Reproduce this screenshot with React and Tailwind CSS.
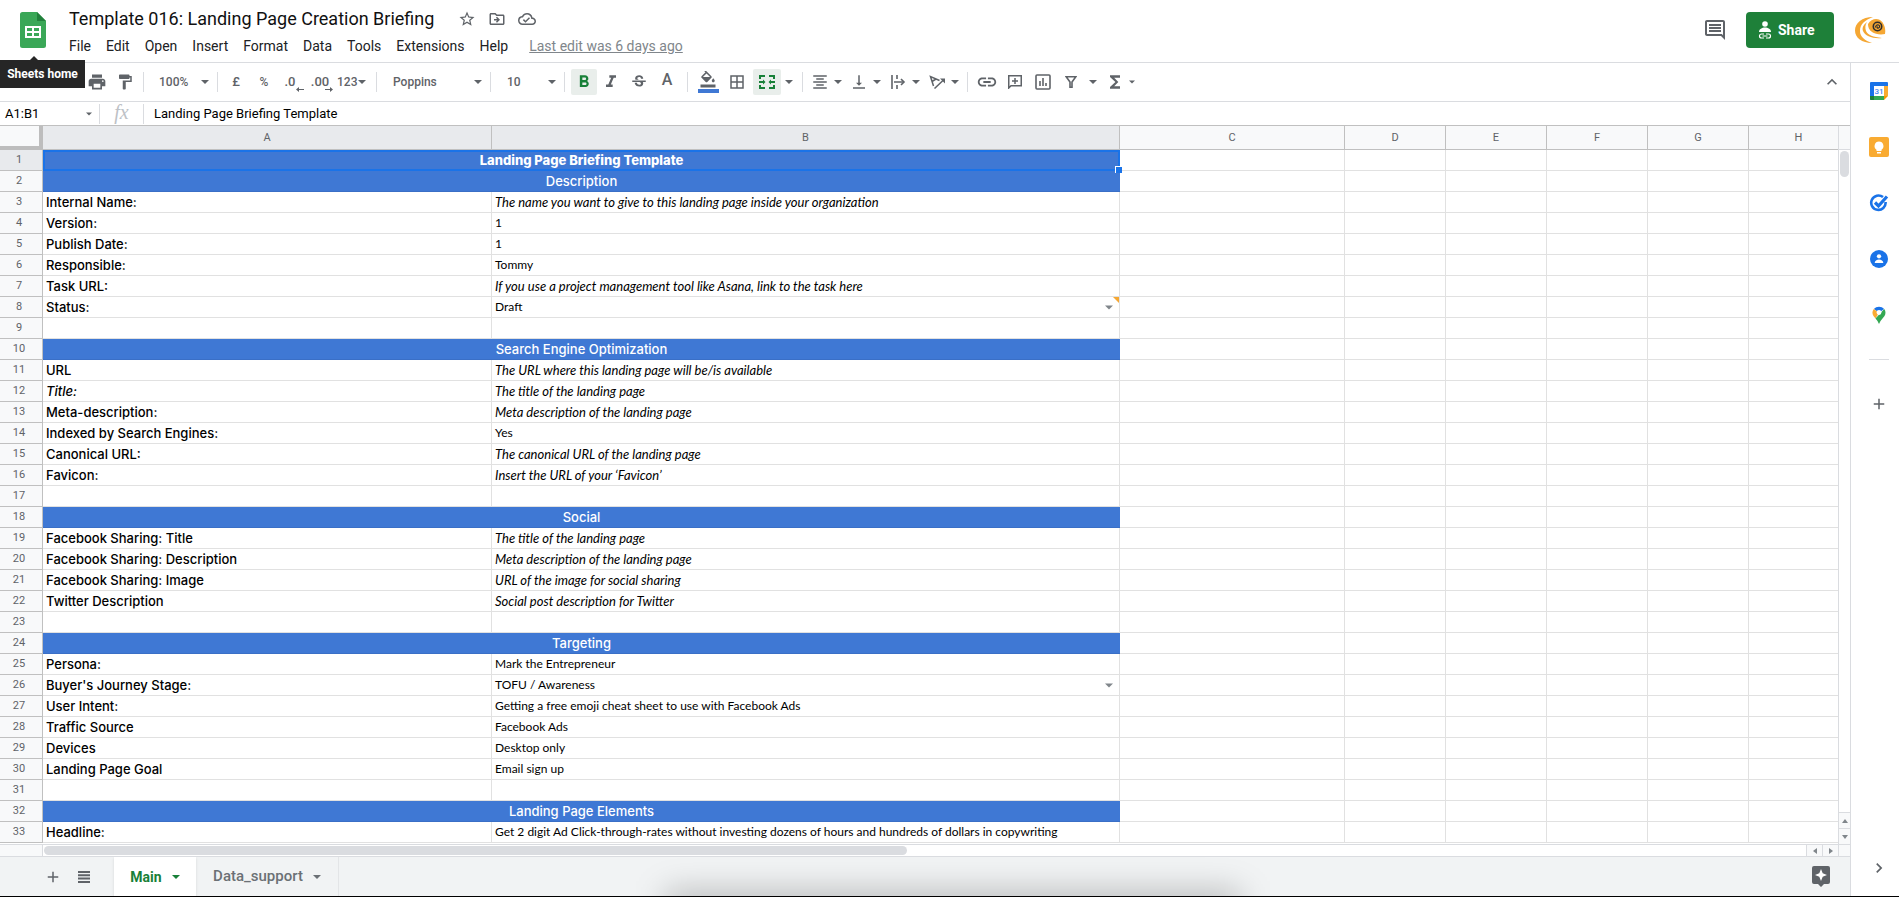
import {
  MdAdd,
  MdBorderAll,
  MdFormatAlignCenter,
  MdFormatBold,
  MdFormatColorFill,
  MdFormatItalic,
  MdFormatPaint,
  MdFunctions,
  MdInsertLink,
  MdKeyboardArrowRight,
  MdKeyboardArrowUp,
  MdOutlineCloudDone,
  MdOutlineDriveFileMove,
  MdOutlineInsertComment,
  MdPrint,
  MdStarBorder,
  MdStrikethroughS,
  MdVerticalAlignBottom,
} from 'react-icons/md'
import clsx from 'clsx'

const MENUS = ['File', 'Edit', 'Open', 'Insert', 'Format', 'Data', 'Tools', 'Extensions', 'Help']

const COLUMNS = ['A', 'B', 'C', 'D', 'E', 'F', 'G', 'H']

const ROWS = [
  { section: 'Landing Page Briefing Template', selected: true },
  { section: 'Description' },
  { label: 'Internal Name:', value: 'The name you want to give to this landing page inside your organization', italic: true },
  { label: 'Version:', value: '1' },
  { label: 'Publish Date:', value: '1' },
  { label: 'Responsible:', value: 'Tommy' },
  { label: 'Task URL:', value: 'If you use a project management tool like Asana, link to the task here', italic: true },
  { label: 'Status:', value: 'Draft', dropdown: true, note: true },
  {},
  { section: 'Search Engine Optimization' },
  { label: 'URL', value: 'The URL where this landing page will be/is available', italic: true },
  { label: 'Title:', value: 'The title of the landing page', italic: true, italicLabel: true },
  { label: 'Meta-description:', value: 'Meta description of the landing page', italic: true },
  { label: 'Indexed by Search Engines:', value: 'Yes' },
  { label: 'Canonical URL:', value: 'The canonical URL of the landing page', italic: true },
  { label: 'Favicon:', value: 'Insert the URL of your ‘Favicon’', italic: true },
  {},
  { section: 'Social' },
  { label: 'Facebook Sharing: Title', value: 'The title of the landing page', italic: true },
  { label: 'Facebook Sharing: Description', value: 'Meta description of the landing page', italic: true },
  { label: 'Facebook Sharing: Image', value: 'URL of the image for social sharing', italic: true },
  { label: 'Twitter Description', value: 'Social post description for Twitter', italic: true },
  {},
  { section: 'Targeting' },
  { label: 'Persona:', value: 'Mark the Entrepreneur' },
  { label: "Buyer's Journey Stage:", value: 'TOFU / Awareness', dropdown: true },
  { label: 'User Intent:', value: 'Getting a free emoji cheat sheet to use with Facebook Ads' },
  { label: 'Traffic Source', value: 'Facebook Ads' },
  { label: 'Devices', value: 'Desktop only' },
  { label: 'Landing Page Goal', value: 'Email sign up' },
  {},
  { section: 'Landing Page Elements' },
  { label: 'Headline:', value: 'Get 2 digit Ad Click-through-rates without investing dozens of hours and hundreds of dollars in copywriting' },
]

function Caret({ className }) {
  return (
    <svg viewBox="0 0 8 4" className={clsx('h-1 w-2 shrink-0', className)} fill="currentColor" aria-hidden="true">
      <path d="M0 0h8L4 4z" />
    </svg>
  )
}

function Separator({ className }) {
  return <span className={clsx('h-5 w-px shrink-0 bg-[#dadce0]', className)} />
}

function Tool({ label, active, className, children }) {
  return (
    <button
      type="button"
      aria-label={label}
      className={clsx(
        'flex h-[26px] shrink-0 items-center justify-center',
        active && 'rounded-xs bg-[#e9eeeb] text-[#188038]',
        className || 'w-7',
      )}
    >
      {children}
    </button>
  )
}

function ToolGroup({ label, children }) {
  return (
    <button type="button" aria-label={label} className="flex h-[26px] w-[39px] shrink-0 items-center">
      <span className="flex w-7 justify-center">{children}</span>
      <Caret />
    </button>
  )
}

function SheetsLogo() {
  return (
    <svg viewBox="0 0 26 36" className="h-9 w-[26px]" aria-hidden="true">
      <path d="M2.500 0H17l9 9v24.500a2.500 2.500 0 0 1-2.500 2.500h-21A2.500 2.500 0 0 1 0 33.500v-31A2.500 2.500 0 0 1 2.500 0z" fill="#3aa757" />
      <path d="M17 0l9 9h-9z" fill="#22803c" />
      <path d="M5 14h16v12H5zM7 16v3h5v-3zm7 0v3h5v-3zm-7 5v3h5v-3zm7 0v3h5v-3z" fill="#fff" fillRule="evenodd" />
    </svg>
  )
}

function Avatar() {
  return (
    <svg viewBox="0 0 32 28" className="h-7 w-8" aria-hidden="true">
      <path d="M19 1C8 1 1 7 1 14.500 1 22 8 27 18 27c-7-2.500-12-6-12-12C6 8 11 4 19 1z" fill="#f5a733" />
      <path d="M13 6c-4 3-5 6-4 9 2 5 10 8 19 7-9-1-14-3-16-7-1-3-1-6 1-9z" fill="#f5a733" />
      <path d="M14 8c3-5 8-6 12-4 4 3 6 8 5 14-5 1-10 0-13-2-3-2-4-5-4-8z" fill="#f5a733" />
      <circle cx="23.500" cy="10.500" r="4.200" fill="#f5a733" stroke="#2d2d2d" strokeWidth="1.600" />
      <path d="M21.500 11.500c0-2 1.500-3 3-2.500s1.500 2.500 0 3-2-.5-1-1.500" fill="none" stroke="#2d2d2d" strokeWidth="1.100" />
    </svg>
  )
}

function Header() {
  return (
    <header className="flex h-[63px] shrink-0 items-start border-b border-[#dadce0] bg-white">
      <div className="relative ml-5 mt-3 shrink-0">
        <a href="#home" aria-label="Sheets home">
          <SheetsLogo />
        </a>
        <div
          role="tooltip"
          className="absolute top-12 -left-5 z-20 flex h-7 w-[85px] items-center justify-center bg-[#262626] text-xs font-bold whitespace-nowrap text-white"
        >
          <svg viewBox="0 0 10 5" className="absolute -top-1 left-[29px] h-[5px] w-[10px]" aria-hidden="true">
            <path d="M5 0l5 5H0z" fill="#262626" />
          </svg>
          Sheets home
        </div>
      </div>

      <div className="ml-[23px] min-w-0 flex-1">
        <div className="flex h-[37px] items-center">
          <h1 className="text-lg leading-6 whitespace-nowrap text-[#111]">Template 016: Landing Page Creation Briefing</h1>
          <div className="ml-6 flex items-center gap-3 text-[#5f6368]">
            <button type="button" aria-label="Star"><MdStarBorder className="size-[18px]" /></button>
            <button type="button" aria-label="Move"><MdOutlineDriveFileMove className="size-[18px]" /></button>
            <button type="button" aria-label="See document status"><MdOutlineCloudDone className="size-[18px]" /></button>
          </div>
        </div>
        <nav className="flex h-[18px] items-center gap-[15px] text-sm whitespace-nowrap text-[#202124]">
          {MENUS.map((menu) => (
            <button key={menu} type="button">{menu}</button>
          ))}
          <a href="#history" className="ml-[6px] text-[#80868b] underline">Last edit was 6 days ago</a>
        </nav>
      </div>

      <div className="flex h-[60px] shrink-0 items-center pr-[13px]">
        <button type="button" aria-label="Open comment history" className="text-[#5f6368]">
          <MdOutlineInsertComment className="size-6" />
        </button>
        <button
          type="button"
          className="ml-[19px] flex h-9 w-[88px] items-center gap-[6px] rounded-sm bg-[#1e8039] pl-3 text-sm font-bold text-white"
        >
          <svg viewBox="0 0 14 18" className="h-[18px] w-[14px]" fill="#fff" aria-hidden="true">
            <circle cx="7" cy="3" r="2.800" />
            <path d="M1 11c0-3 3-4.500 6-4.500s6 1.500 6 4.500z" />
            <path d="M6 13H3.500a2 2 0 0 0 0 4H6m2-4h2.500a2 2 0 0 1 0 4H8M4.500 15h5" fill="none" stroke="#fff" strokeWidth="1.200" />
          </svg>
          Share
        </button>
        <button type="button" aria-label="Account" className="ml-5">
          <Avatar />
        </button>
      </div>
    </header>
  )
}

function Toolbar() {
  return (
    <div className="flex h-[39px] shrink-0 items-center border-b border-[#dadce0] pl-[83px] text-[#5f6368]">
      <Tool label="Print"><MdPrint className="size-5" /></Tool>
      <Tool label="Paint format"><MdFormatPaint className="size-[18px]" /></Tool>
      <Separator className="ml-1" />
      <button type="button" className="flex w-[73px] shrink-0 items-center justify-between pr-2 pl-[15px] text-xs font-medium">
        100% <Caret />
      </button>
      <Separator className="mr-1" />
      <Tool label="Format as currency"><span className="text-[13px] font-medium">£</span></Tool>
      <Tool label="Format as percent"><span className="text-xs font-medium">%</span></Tool>
      <Tool label="Decrease decimal places">
        <span className="relative pr-1 text-[13px] font-medium">
          .0
          <svg viewBox="0 0 8 5" className="absolute -right-1 bottom-0 h-[5px] w-2" fill="currentColor" aria-hidden="true">
            <path d="M0 2.500L3 0v2h5v1H3v2z" />
          </svg>
        </span>
      </Tool>
      <Tool label="Increase decimal places">
        <span className="relative text-[13px] font-medium">
          .00
          <svg viewBox="0 0 8 5" className="absolute -right-1 bottom-0 h-[5px] w-2" fill="currentColor" aria-hidden="true">
            <path d="M8 2.500L5 0v2H0v1h5v2z" />
          </svg>
        </span>
      </Tool>
      <button type="button" className="flex w-[38px] shrink-0 items-center gap-px pl-[3px] text-xs font-medium">
        123 <Caret />
      </button>
      <Separator className="ml-1" />
      <button type="button" className="flex w-[113px] shrink-0 items-center justify-between pr-2 pl-4 text-xs font-medium">
        Poppins <Caret />
      </button>
      <Separator />
      <button type="button" className="flex w-[73px] shrink-0 items-center justify-between pr-2 pl-4 text-xs font-medium">
        10 <Caret />
      </button>
      <Separator />
      <Tool label="Bold" active className="ml-[6px] w-[26px]"><MdFormatBold className="size-5" /></Tool>
      <Tool label="Italic"><MdFormatItalic className="size-5" /></Tool>
      <Tool label="Strikethrough"><MdStrikethroughS className="size-[18px]" /></Tool>
      <Tool label="Text colour"><span className="pb-1 text-base leading-4 font-medium">A</span></Tool>
      <Separator className="mx-[6px]" />
      <Tool label="Fill colour">
        <span className="flex flex-col items-center">
          <MdFormatColorFill className="size-[18px]" viewBox="0 2 24 24" />
          <span className="h-1 w-[21px] bg-[#3f78d4]" />
        </span>
      </Tool>
      <Tool label="Borders" className="ml-px w-7"><MdBorderAll className="size-[18px]" /></Tool>
      <Tool label="Merge cells" active className="ml-[2px] w-7">
        <svg viewBox="0 0 16 14" className="h-[14px] w-4" fill="none" stroke="currentColor" strokeWidth="2" aria-hidden="true">
          <path d="M1 4V1h5M10 1h5v3M1 10v3h5M10 13h5v-3M0 7h5M16 7h-5" />
          <path d="M4 4.500L6.500 7 4 9.500zM12 4.500L9.500 7l2.500 2.500z" fill="currentColor" stroke="none" />
        </svg>
      </Tool>
      <Tool label="Select merge type" className="w-4"><Caret /></Tool>
      <Separator className="ml-[5px] mr-[3px]" />
      <ToolGroup label="Horizontal align"><MdFormatAlignCenter className="size-[18px]" /></ToolGroup>
      <ToolGroup label="Vertical align"><MdVerticalAlignBottom className="size-[18px]" /></ToolGroup>
      <ToolGroup label="Text wrapping">
        <svg viewBox="0 0 16 14" className="h-[14px] w-4" fill="none" stroke="currentColor" aria-hidden="true">
          <path d="M2 0v14M7 0v4M7 10v4M4 7h9" strokeWidth="1.600" />
          <path d="M11 4l3 3-3 3" strokeWidth="1.600" />
        </svg>
      </ToolGroup>
      <ToolGroup label="Text rotation">
        <svg viewBox="0 0 17 14" className="h-[14px] w-[17px]" fill="none" stroke="currentColor" strokeWidth="1.500" aria-hidden="true">
          <path d="M4.500 11L1.500 1.500l9 4M3 6.500l4-2.500M5.500 13.500l9-8.500" />
          <path d="M11 3.500h5v5z" fill="currentColor" stroke="none" />
        </svg>
      </ToolGroup>
      <Separator className="mx-[5px]" />
      <Tool label="Insert link"><MdInsertLink className="size-[22px]" /></Tool>
      <Tool label="Insert comment">
        <svg viewBox="0 0 14 14" className="size-[14px]" fill="none" stroke="currentColor" strokeWidth="1.500" aria-hidden="true">
          <path d="M.75 13V.75h12.500v10H3L.75 13zM7 3v6M4 6h6" />
        </svg>
      </Tool>
      <Tool label="Insert chart">
        <svg viewBox="0 0 16 16" className="size-4" fill="none" stroke="currentColor" strokeWidth="1.600" aria-hidden="true">
          <rect x="1" y="1" width="14" height="14" rx="1" />
          <path d="M5 12V7M8 12V4M11 12V9" />
        </svg>
      </Tool>
      <Tool label="Create a filter">
        <svg viewBox="0 0 12 12" className="size-3" fill="none" stroke="currentColor" strokeWidth="1.600" aria-hidden="true">
          <path d="M1.200.8h9.600L7 6v5.200H5V6z" />
        </svg>
      </Tool>
      <Tool label="Filter views" className="w-4"><Caret /></Tool>
      <Tool label="Functions"><MdFunctions className="size-5" /></Tool>
      <Caret className="w-[6px]" />
      <button type="button" aria-label="Hide the menus" className="mr-2 ml-auto">
        <MdKeyboardArrowUp className="size-5" />
      </button>
    </div>
  )
}

function FormulaBar() {
  return (
    <div className="flex h-6 shrink-0 items-center border-b border-[#c0c0c0] text-[13px]">
      <button type="button" className="flex h-5 w-[99px] shrink-0 items-center justify-between pr-[7px] pl-[5px] text-black">
        A1:B1 <Caret className="w-[6px] text-[#5f6368]" />
      </button>
      <Separator />
      <span className="w-[43px] shrink-0 pb-1 text-center font-['Liberation_Serif',serif] text-xl leading-5 text-[#bdc1c6] italic">fx</span>
      <Separator className="h-4" />
      <input
        aria-label="Formula"
        defaultValue="Landing Page Briefing Template"
        className="h-5 min-w-0 flex-1 px-[10px] text-black outline-none"
      />
    </div>
  )
}

const cellBorder = 'border-r border-b border-[#e1e1e1]'
const headBorder = 'border-r border-b border-[#c0c0c0]'

function Row({ row, number }) {
  return (
    <tr className="h-[21px]">
      <th
        scope="row"
        className={clsx(
          'p-0 pr-1 text-center text-[11px] leading-5 font-normal text-[#5f6368]',
          headBorder,
          row.selected ? 'bg-[#e8eaed]' : 'bg-[#f8f9fa]',
        )}
      >
        {number}
      </th>
      {row.section ? (
        <td
          colSpan={2}
          className={clsx(
            "relative border-b border-[#3a6fc6] bg-[#3f78d4] p-0 text-center font-['Inter',sans-serif] text-[13px] leading-5 text-white",
            row.selected ? 'font-extrabold' : 'font-medium',
          )}
        >
          {row.section}
          {row.selected && (
            <>
              <span className="absolute inset-x-0 top-0 -bottom-px border-2 border-[#1a73e8]" />
              <span className="absolute -right-[2px] -bottom-[3px] z-10 size-[7px] border-t border-l border-white bg-[#1a73e8]" />
            </>
          )}
        </td>
      ) : (
        <>
          <td
            className={clsx(
              "p-0 pl-[3px] font-['Inter',sans-serif] text-[13px] leading-5 font-medium whitespace-nowrap text-black",
              cellBorder,
              row.italicLabel && 'italic',
            )}
          >
            {row.label}
          </td>
          <td
            className={clsx(
              "relative p-0 pl-[3px] font-['Lato',sans-serif] leading-5 whitespace-nowrap text-black",
              cellBorder,
              row.italic ? 'text-[13px] italic' : 'text-[12px]',
            )}
          >
            {row.value}
            {row.dropdown && (
              <button type="button" aria-label="Choose value" className="absolute top-2 right-[6px] text-[#80868b]">
                <Caret className="block h-[5px]" />
              </button>
            )}
            {row.note && (
              <svg viewBox="0 0 6 6" className="absolute top-0 right-0 size-[6px]" aria-hidden="true">
                <path d="M0 0h6v6z" fill="#f5a733" />
              </svg>
            )}
          </td>
        </>
      )}
      {COLUMNS.slice(2).map((column) => (
        <td key={column} className={clsx('p-0', cellBorder)} />
      ))}
    </tr>
  )
}

function Grid() {
  return (
    <div className="flex min-h-0 min-w-0 flex-1 flex-col overflow-hidden">
      {/* the last column runs on under the scroll bar */}
      <table className="w-[calc(100%+11px)] shrink-0 table-fixed border-separate border-spacing-0">
        <colgroup>
          <col className="w-[43px]" />
          <col className="w-[449px]" />
          <col className="w-[628px]" />
          <col className="w-[225px]" />
          <col className="w-[101px]" />
          <col className="w-[101px]" />
          <col className="w-[101px]" />
          <col className="w-[101px]" />
          <col />
        </colgroup>
        <thead>
          <tr className="h-6">
            <th aria-label="Select all" className="border-r-4 border-b-4 border-[#bdbdbd] bg-[#f8f9fa] p-0" />
            {COLUMNS.map((column) => (
              <th
                key={column}
                scope="col"
                className={clsx(
                  'p-0 text-center text-[11px] leading-5 font-normal text-[#5f6368]',
                  headBorder,
                  column === 'A' || column === 'B' ? 'bg-[#e8eaed]' : 'bg-[#f8f9fa]',
                )}
              >
                {column}
              </th>
            ))}
          </tr>
        </thead>
        <tbody>
          {ROWS.map((row, index) => (
            <Row key={index} row={row} number={index + 1} />
          ))}
        </tbody>
      </table>
    </div>
  )
}

function ScrollArrow({ label, d, className }) {
  return (
    <button
      type="button"
      aria-label={label}
      className={clsx('flex shrink-0 items-center justify-center border-[#dadce0] bg-[#f8f9fa] text-[#80868b]', className)}
    >
      <svg viewBox="0 0 6 6" className="size-[6px]" fill="currentColor" aria-hidden="true">
        <path d={d} />
      </svg>
    </button>
  )
}

function VerticalScroll() {
  return (
    <div className="flex w-3 shrink-0 flex-col border-l border-[#dadce0]">
      <div className="h-6 shrink-0 border-b border-[#dadce0] bg-[#f8f9fa]" />
      <div className="flex-1 px-px pt-px">
        <div className="h-[26px] rounded-full bg-[#dadce0]" />
      </div>
      <ScrollArrow label="Scroll up" d="M3 1l3 4H0z" className="h-4 border-t" />
      <ScrollArrow label="Scroll down" d="M0 1h6L3 5z" className="h-4 border-t" />
    </div>
  )
}

function HorizontalScroll() {
  return (
    <div className="flex h-[13px] shrink-0 border-y border-[#dadce0]">
      <div className="w-[43px] shrink-0 border-r border-[#dadce0] bg-[#f8f9fa]" />
      <div className="flex-1 py-px pl-px">
        <div className="h-[9px] w-[49%] rounded-full bg-[#dadce0]" />
      </div>
      <ScrollArrow label="Scroll left" d="M5 0v6L1 3z" className="w-4 border-l" />
      <ScrollArrow label="Scroll right" d="M1 0v6l4-3z" className="w-4 border-l" />
      <div className="w-3 shrink-0 border-l border-[#dadce0] bg-[#f8f9fa]" />
    </div>
  )
}

function SheetTabs() {
  return (
    <footer className="relative flex h-[39px] shrink-0 items-center overflow-hidden bg-[#f1f3f4] text-[#5f6368]">
      {/* soft shadow rising from the dock */}
      <div className="absolute -bottom-6 left-[36%] h-7 w-[31%] bg-black/25 blur-lg" />
      <button type="button" aria-label="Add sheet" className="ml-11"><MdAdd className="size-[18px]" /></button>
      <button type="button" aria-label="All sheets" className="ml-4">
        <svg viewBox="0 0 12 12" className="size-3" stroke="currentColor" strokeWidth="2" aria-hidden="true">
          <path d="M0 1h12M0 4.300h12M0 7.600h12M0 11h12" />
        </svg>
      </button>
      <button
        type="button"
        className="ml-6 flex h-full w-[82px] items-center justify-center gap-[10px] bg-white text-sm font-bold text-[#188038] shadow"
      >
        Main <Caret />
      </button>
      <button
        type="button"
        className="flex h-full w-[143px] items-center justify-center gap-[10px] border-r border-[#e3e5e7] text-[15px] font-medium text-[#6b7075]"
      >
        Data_support <Caret />
      </button>
      <button type="button" aria-label="Explore" className="mr-5 ml-auto">
        <svg viewBox="0 0 18 21" className="h-[21px] w-[18px]" aria-hidden="true">
          <path d="M2 0h14a2 2 0 0 1 2 2v14a2 2 0 0 1-2 2h-4l-3 3-3-3H2a2 2 0 0 1-2-2V2a2 2 0 0 1 2-2z" fill="#5f6368" />
          <path d="M9 3l1.700 4.300L15 9l-4.300 1.700L9 15l-1.700-4.300L3 9l4.300-1.700z" fill="#fff" />
        </svg>
      </button>
    </footer>
  )
}

function SideButton({ label, children }) {
  return (
    <button type="button" aria-label={label} className="flex h-14 w-full items-center justify-center">
      {children}
    </button>
  )
}

function SidePanel() {
  return (
    <aside className="flex w-[49px] shrink-0 flex-col items-center border-l border-[#dadce0] pl-2 text-[#5f6368]">
      <SideButton label="Calendar">
        <svg viewBox="0 0 20 20" className="size-5" aria-hidden="true">
          <path d="M2 1h16a1 1 0 0 1 1 1v3H5v14H2a1 1 0 0 1-1-1V2a1 1 0 0 1 1-1z" fill="#1a73e8" />
          <path d="M15 5h4v10h-4z" fill="#f9ab32" />
          <path d="M5 15h10v4H5z" fill="#34a853" />
          <path d="M1 15h4v4H2a1 1 0 0 1-1-1z" fill="#1e8039" />
          <path d="M15 15h4l-4 4z" fill="#f29900" />
          <path d="M5 5h10v10H5z" fill="#fff" />
          <text x="10" y="13" textAnchor="middle" fontSize="8" fontWeight="500" fill="#4285f4">31</text>
        </svg>
      </SideButton>
      <SideButton label="Keep">
        <svg viewBox="0 0 20 20" className="size-5" aria-hidden="true">
          <rect width="20" height="20" rx="2" fill="#f9ab32" />
          <path d="M10 4.500a4.500 4.500 0 0 0-2.500 8.200V14h5v-1.300A4.500 4.500 0 0 0 10 4.500zM8 15h4v1.500H8z" fill="#fff" />
        </svg>
      </SideButton>
      <SideButton label="Tasks">
        <svg viewBox="0 0 20 20" className="size-5" fill="none" stroke="#1a73e8" strokeWidth="2.600" aria-hidden="true">
          <path d="M14 4.100A7.200 7.200 0 1 0 16.600 9" />
          <path d="M6 9.500l3.500 3.500L18 3.500" strokeWidth="3.200" />
        </svg>
      </SideButton>
      <SideButton label="Contacts">
        <svg viewBox="0 0 20 20" className="size-[18px]" aria-hidden="true">
          <circle cx="10" cy="10" r="10" fill="#1a73e8" />
          <circle cx="10" cy="7" r="2.400" fill="#fff" />
          <path d="M5.200 14.500c0-5.300 9.600-5.300 9.600 0z" fill="#fff" />
        </svg>
      </SideButton>
      <SideButton label="Maps">
        <svg viewBox="0 0 14 18" className="h-[18px] w-[14px]" aria-hidden="true">
          <path d="M1.800 3A7 7 0 0 1 12.200 3L7 6.500z" fill="#1a73e8" />
          <path d="M1.800 3C0 5 0 8 1.500 10l2 2.500L7 7z" fill="#f9ab32" />
          <path d="M12.200 3c1.500 2 1.800 4.500.3 7L8.500 15 7 18l-1.500-3-2-2.500z" fill="#34a853" />
          <circle cx="7" cy="6.500" r="2.400" fill="#fff" />
        </svg>
      </SideButton>
      <hr className="my-4 w-5 border-[#dadce0]" />
      <SideButton label="Get add-ons"><MdAdd className="size-[18px]" /></SideButton>
      <button type="button" aria-label="Hide side panel" className="mt-auto mb-[18px]">
        <MdKeyboardArrowRight className="size-5" />
      </button>
    </aside>
  )
}

export default function App() {
  return (
    <div className="flex h-screen flex-col overflow-hidden border-b border-black bg-white font-['Roboto',sans-serif]">
      <Header />
      <div className="flex min-h-0 flex-1">
        <main className="flex min-w-0 flex-1 flex-col">
          <Toolbar />
          <FormulaBar />
          <div className="flex min-h-0 flex-1">
            <Grid />
            <VerticalScroll />
          </div>
          <HorizontalScroll />
          <SheetTabs />
        </main>
        <SidePanel />
      </div>
    </div>
  )
}
